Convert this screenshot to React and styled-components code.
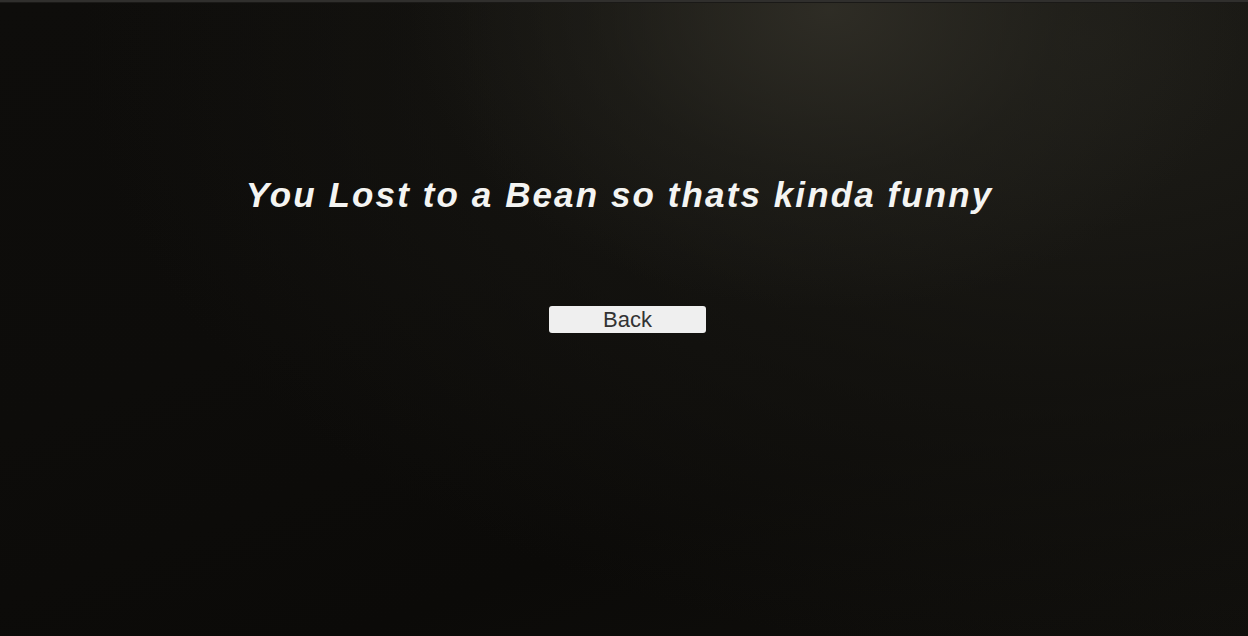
import React from "react";
import styled, { createGlobalStyle } from "styled-components";

const GlobalStyle = createGlobalStyle`
	html, body {
		margin: 0;
		padding: 0;
		background: #0c0b09;
	}
`;

// dark olive backdrop, brighter toward the upper right
const Screen = styled.div`
	width: 1248px;
	height: 636px;
	overflow: hidden;
	display: flex;
	flex-direction: column;
	background:
		radial-gradient(ellipse 420px 300px at 830px 10px, rgba(50, 48, 40, 0.85), rgba(38, 37, 31, 0.45) 55%, rgba(20, 19, 16, 0) 100%),
		radial-gradient(ellipse 1000px 620px at 1080px 40px, rgba(30, 29, 24, 1), rgba(24, 23, 19, 0.6) 55%, rgba(12, 11, 9, 0) 100%),
		linear-gradient(160deg, #0e0d0b 0%, #0d0c0a 40%, #0b0a08 70%, #100f0c 100%);
	font-family: "Liberation Sans", Arial, sans-serif;
`;

const TopStrip = styled.div`
	height: 2px;
	flex-shrink: 0;
	background: #302f2d;
	border-bottom: 1px solid #1a1917;
`;

const Content = styled.div`
	flex: 1;
	display: flex;
	flex-direction: column;
	align-items: center;
	padding-top: 166px;
	padding-right: 9px;
`;

const Title = styled.h1`
	margin: 0;
	font-size: 35px;
	font-weight: bold;
	font-style: italic;
	letter-spacing: 2.1px;
	color: #f4f4f2;
	line-height: 52px;
`;

const BackButton = styled.button`
	margin-top: 85px;
	margin-left: 16px;
	width: 157px;
	height: 27px;
	padding: 0;
	border: none;
	border-radius: 3px;
	background: #efefef;
	color: #333;
	font-family: "Liberation Sans", Arial, sans-serif;
	font-size: 22px;
	line-height: 27px;
	cursor: pointer;
`;

const App = () => {
	return (
		<>
			<GlobalStyle />
			<Screen>
				<TopStrip />
				<Content>
					<Title>You Lost to a Bean so thats kinda funny</Title>
					<BackButton>Back</BackButton>
				</Content>
			</Screen>
		</>
	);
};

export default App;
